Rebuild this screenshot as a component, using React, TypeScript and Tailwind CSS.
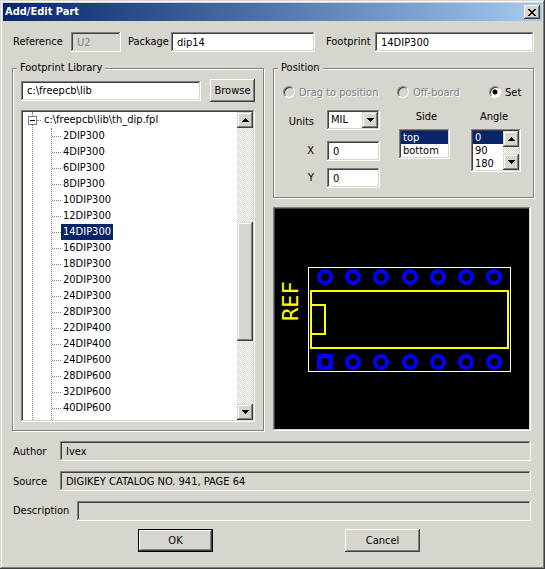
import type { ReactNode } from "react";

const SUNKEN =
  "shadow-[inset_-1px_-1px_#fff,inset_1px_1px_#808080,inset_-2px_-2px_#d6d6ce,inset_2px_2px_#404040]";
const RAISED =
  "bg-[#d6d6ce] shadow-[inset_-1px_-1px_#404040,inset_1px_1px_#fff,inset_-2px_-2px_#808080]";
const SCROLL_PART =
  "bg-[#d6d6ce] shadow-[inset_-1px_-1px_#404040,inset_1px_1px_#d6d6ce,inset_-2px_-2px_#808080,inset_2px_2px_#fff]";
const TRACK = "bg-[repeating-conic-gradient(#fff_0_25%,#d6d6ce_0_50%)] bg-[length:2px_2px]";
const FIELD = `h-5 min-w-0 px-[6px] outline-none ${SUNKEN}`;

const FOOTPRINTS = [
  "2DIP300", "4DIP300", "6DIP300", "8DIP300", "10DIP300", "12DIP300",
  "14DIP300", "16DIP300", "18DIP300", "20DIP300", "24DIP300", "28DIP300",
  "22DIP400", "24DIP400", "24DIP600", "28DIP600", "32DIP600", "40DIP600",
];

const PIN_X = [50, 78, 106, 135, 163, 191, 219];

function Arrow({ up = false }: { up?: boolean }) {
  return (
    <svg width="7" height="4" viewBox="0 0 7 4" shapeRendering="crispEdges" aria-hidden="true">
      <path d={up ? "M3 0h1v1h1v1h1v1h1v1H0V3h1V2h1V1h1z" : "M0 0h7v1H6v1H5v1H4v1H3V3H2V2H1V1H0z"} />
    </svg>
  );
}

function ScrollButton({ up = false, label }: { up?: boolean; label: string }) {
  return (
    <button
      type="button"
      aria-label={label}
      className={`flex h-4 w-4 shrink-0 items-center justify-center ${SCROLL_PART}`}
    >
      <Arrow up={up} />
    </button>
  );
}

function Group({ title, className, children }: { title: string; className: string; children: ReactNode }) {
  return (
    <fieldset
      className={`min-w-0 border border-[#808080] px-2 shadow-[1px_1px_#fff,inset_1px_1px_#fff] ${className}`}
    >
      <legend className="-ml-1 bg-[#d6d6ce] px-[3px]">{title}</legend>
      {children}
    </fieldset>
  );
}

function Radio({ label, checked = false, disabled = false }: { label: string; checked?: boolean; disabled?: boolean }) {
  return (
    <label
      className={`flex items-start gap-1 whitespace-nowrap ${
        disabled ? "text-[#808080] [text-shadow:1px_1px_#fff]" : ""
      }`}
    >
      <input
        type="radio"
        name="placement"
        defaultChecked={checked}
        disabled={disabled}
        className="h-3 w-3 shrink-0 appearance-none rounded-full border bg-white [border-color:#808080_#fff_#fff_#808080] shadow-[inset_1px_1px_#404040] checked:bg-[radial-gradient(circle,#000_2px,#fff_3px)] disabled:bg-[#d6d6ce]"
      />
      {label}
    </label>
  );
}

const OPTION =
  "h-[13px] min-h-0 p-0 pl-[2px] leading-[13px] checked:bg-[linear-gradient(#0a246a,#0a246a)] checked:[-webkit-text-fill-color:#fff]";
const LISTBOX =
  "min-w-0 flex-1 appearance-none overflow-hidden border-0 bg-white p-0 outline-none [scrollbar-width:none]";

function InfoRow({ id, label, value, wide = false }: { id: string; label: string; value: string; wide?: boolean }) {
  return (
    <div className="flex items-center">
      <label htmlFor={id} className={wide ? "w-16 shrink-0" : "w-[47px] shrink-0 pt-[2px]"}>
        {label}
      </label>
      <input id={id} readOnly defaultValue={value} className={`flex-1 bg-[#d6d6ce] ${FIELD}`} />
    </div>
  );
}

function Preview() {
  return (
    <div className={`mt-[9px] mr-[3px] min-h-[224px] flex-1 p-[2px] ${SUNKEN}`}>
      <svg viewBox="0 0 254 220" className="block h-full w-full bg-black" role="img" aria-label="Footprint preview">
        <rect x="33.5" y="58.5" width="202" height="104" fill="none" stroke="#fff" />
        <g fill="none" stroke="#ff0" strokeWidth="2">
          <rect x="36" y="82" width="197" height="57" />
          <path d="M36 96h14v29H36" />
        </g>
        <g fill="none" stroke="#00f" strokeWidth="4">
          {PIN_X.map((x) => (
            <circle key={x} cx={x} cy="68" r="6" />
          ))}
          {PIN_X.slice(1).map((x) => (
            <circle key={x} cx={x} cy="153" r="6" />
          ))}
        </g>
        <rect x="42" y="145" width="16" height="16" fill="#00f" />
        <circle cx="50" cy="153" r="4" />
        <text
          transform="translate(23 112) rotate(-90)"
          fill="#ff0"
          className="font-['DejaVu_Sans_Mono',monospace] text-[22px]"
        >
          REF
        </text>
      </svg>
    </div>
  );
}

export default function App() {
  return (
    <div className="w-full bg-[#d6d6ce] p-[3px] pb-[17px] font-['DejaVu_Sans_Condensed','DejaVu_Sans',sans-serif] text-[11px] leading-[14px] text-black shadow-[inset_-1px_-1px_#404040,inset_1px_1px_#d6d6ce,inset_-2px_-2px_#808080,inset_2px_2px_#fff]">
      <header className="flex h-[18px] items-center justify-between bg-linear-to-r from-[#0a246a] to-[#a6caf0] pr-[2px] pl-[2px]">
        <h1 className="font-bold text-white">Add/Edit Part</h1>
        <button type="button" aria-label="Close" className={`flex h-[14px] w-4 items-center justify-center ${RAISED}`}>
          <svg width="8" height="7" viewBox="0 0 8 7" shapeRendering="crispEdges" aria-hidden="true">
            <path d="M0 0h2v1h1v1h2V1h1V0h2v1H7v1H6v1H5v1h1v1h1v1h1v1H6V6H5V5H3v1H2v1H0V6h1V5h1V4h1V3H2V2H1V1H0z" />
          </svg>
        </button>
      </header>

      <div className="flex items-center pt-[11px] pr-2 pl-[10px]">
        <label htmlFor="reference" className="w-[58px] shrink-0">Reference</label>
        <input id="reference" disabled defaultValue="U2" className={`w-[50px] bg-[#d6d6ce] text-[#808080] ${FIELD}`} />
        <label htmlFor="package" className="ml-[7px] w-[43px] shrink-0">Package</label>
        <input id="package" defaultValue="dip14" className={`w-36 bg-white ${FIELD}`} />
        <label htmlFor="footprint" className="ml-[11px] w-[49px] shrink-0">Footprint</label>
        <input id="footprint" defaultValue="14DIP300" className={`flex-1 bg-white ${FIELD}`} />
      </div>

      <main className="mt-[9px] grid grid-cols-[252px_1fr] gap-[9px] pr-2 pl-[9px]">
        <Group title="Footprint Library" className="pt-1 pb-2">
          <div className="flex items-center gap-[9px]">
            <input aria-label="Library folder" defaultValue="c:\freepcb\lib" className={`flex-1 bg-white ${FIELD}`} />
            <button type="button" className={`h-[23px] w-[45px] ${RAISED}`}>Browse</button>
          </div>
          <div className={`mt-2 flex bg-white p-[2px] ${SUNKEN}`}>
            <div className="ml-[9px] flex-1 border-l border-dotted border-[#808080]">
              <div className="flex h-4 items-center">
                <button
                  type="button"
                  aria-label="Collapse library"
                  className="-ml-[5px] flex h-[9px] w-[9px] items-center justify-center border border-[#808080] bg-white"
                >
                  <span className="h-px w-[5px] bg-black" />
                </button>
                <span className="mr-[3px] w-1 border-t border-dotted border-[#808080]" />
                c:\freepcb\lib\th_dip.fpl
              </div>
              <ul className="ml-[18px] border-l border-dotted border-[#808080] pb-1">
                {FOOTPRINTS.map((name) => (
                  <li key={name} className="flex h-4 items-center">
                    <span className="w-[9px] border-t border-dotted border-[#808080]" />
                    <span
                      className={`px-[2px] leading-4 ${name === "14DIP300" ? "bg-[#0a246a] text-white" : ""}`}
                    >
                      {name}
                    </span>
                  </li>
                ))}
              </ul>
            </div>
            <div className={`flex w-4 flex-col ${TRACK}`}>
              <ScrollButton up label="Scroll up" />
              <span className="flex-[94]" />
              <span className={`flex-[119] ${SCROLL_PART}`} />
              <span className="flex-[63]" />
              <ScrollButton label="Scroll down" />
            </div>
          </div>
        </Group>

        <div className="flex min-w-0 flex-col">
          <Group title="Position" className="pt-[11px] pb-[9px]">
            <div className="grid grid-cols-[114px_92px_auto] pl-px">
              <Radio label="Drag to position" disabled />
              <Radio label="Off-board" disabled />
              <Radio label="Set" checked />
            </div>
            <div className="mt-[10px] flex items-start pl-px">
              <div>
                <div className="flex items-center gap-[13px]">
                  <label htmlFor="units" className="w-[31px] pt-1 text-right">Units</label>
                  <div className={`relative h-5 w-[53px] bg-white p-[2px] ${SUNKEN}`}>
                    <select id="units" className="block h-4 w-full appearance-none bg-transparent pl-[2px] outline-none">
                      <option>MIL</option>
                      <option>MM</option>
                    </select>
                    <span
                      className={`pointer-events-none absolute top-[2px] right-[2px] flex h-4 w-4 items-center justify-center ${SCROLL_PART}`}
                    >
                      <Arrow />
                    </span>
                  </div>
                </div>
                <div className="mt-[11px] flex items-center gap-[13px]">
                  <label htmlFor="pos-x" className="w-[31px] text-right">X</label>
                  <input id="pos-x" defaultValue="0" className={`w-[53px] bg-white ${FIELD}`} />
                </div>
                <div className="mt-[7px] flex items-center gap-[13px]">
                  <label htmlFor="pos-y" className="w-[31px] text-right">Y</label>
                  <input id="pos-y" defaultValue="0" className={`w-[53px] bg-white ${FIELD}`} />
                </div>
              </div>
              <div className="ml-[19px] flex w-[51px] flex-col gap-[5px]">
                <label htmlFor="side" className="pl-1 text-center">Side</label>
                <div className={`flex h-[30px] bg-white p-[2px] ${SUNKEN}`}>
                  <select id="side" size={2} defaultValue="top" className={LISTBOX}>
                    <option className={OPTION}>top</option>
                    <option className={OPTION}>bottom</option>
                  </select>
                </div>
              </div>
              <div className="ml-[21px] flex w-[50px] flex-col gap-[5px]">
                <label htmlFor="angle" className="pr-1 text-center">Angle</label>
                <div className={`flex h-[43px] bg-white p-[2px] ${SUNKEN}`}>
                  <select id="angle" size={3} defaultValue="0" className={LISTBOX}>
                    <option className={OPTION}>0</option>
                    <option className={OPTION}>90</option>
                    <option className={OPTION}>180</option>
                    <option className={OPTION}>270</option>
                  </select>
                  <div className={`flex w-4 flex-col justify-between ${TRACK}`}>
                    <ScrollButton up label="Previous angle" />
                    <ScrollButton label="Next angle" />
                  </div>
                </div>
              </div>
            </div>
          </Group>
          <Preview />
        </div>
      </main>

      <section className="mt-[10px] flex flex-col gap-[10px] pr-[11px] pl-[10px]">
        <InfoRow id="author" label="Author" value="Ivex" />
        <InfoRow id="source" label="Source" value="DIGIKEY CATALOG NO. 941, PAGE 64" />
        <InfoRow id="description" label="Description" value="" wide />
      </section>

      <footer className="mt-2 flex justify-center gap-[132px] pl-[13px]">
        <button type="submit" className={`h-[23px] w-[75px] border border-black ${RAISED}`}>OK</button>
        <button type="button" className={`h-[23px] w-[75px] ${RAISED}`}>Cancel</button>
      </footer>
    </div>
  );
}
